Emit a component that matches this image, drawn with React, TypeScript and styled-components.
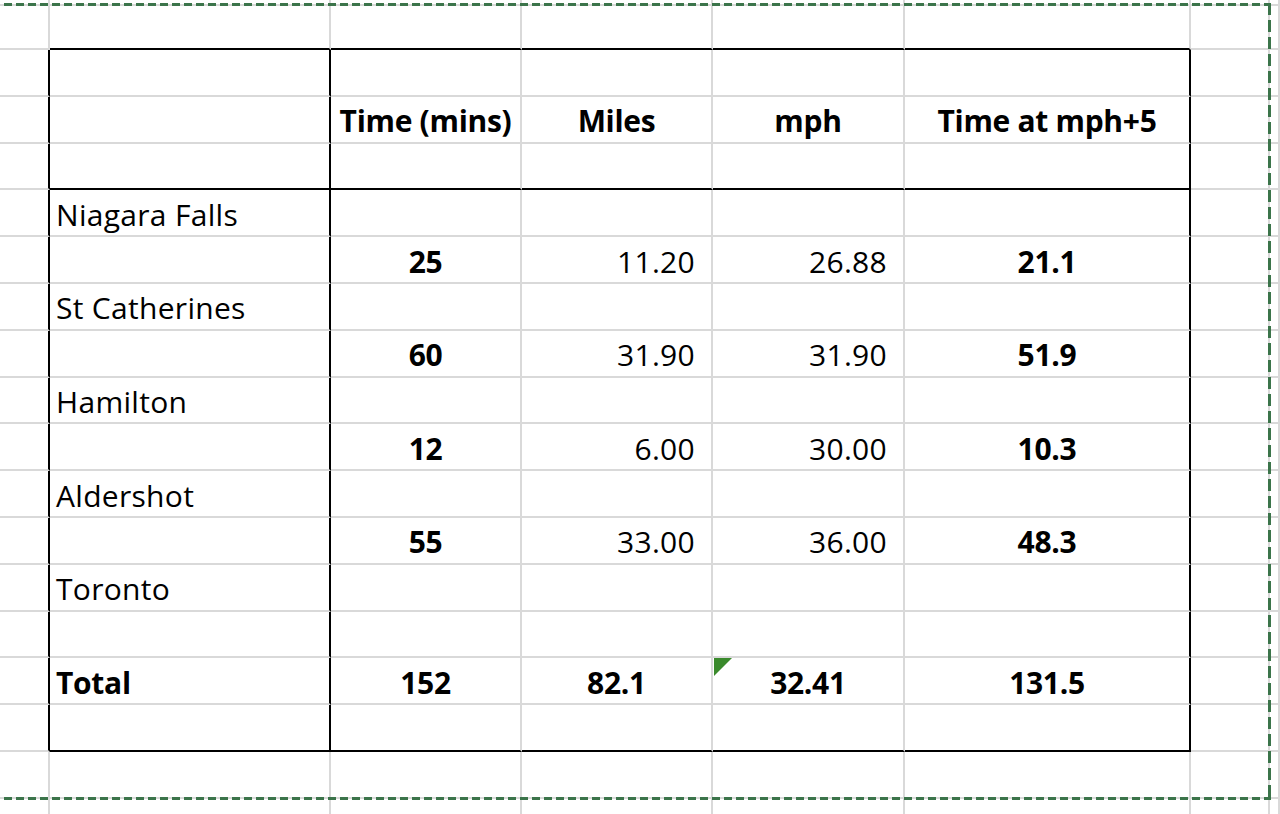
import React from 'react'
import styled, { createGlobalStyle } from 'styled-components'

const GlobalStyle = createGlobalStyle`
  html, body { margin: 0; padding: 0; background: #fff; overflow: hidden; }
  body { font-family: "Open Sans", "Noto Sans", "Liberation Sans", sans-serif; color: #000; }
`

const GRID = '#d9d9d9'
const INK = '#000'
const ANTS = '#3b744a'

type Align = 'left' | 'center' | 'right'
interface CellSpec { text?: string; align?: Align; bold?: boolean; flag?: boolean }

const Sheet = styled.div`
  display: grid;
  width: 1280px;
  height: 814px;
  overflow: hidden;
  grid-template-columns: 50px 281px 191px 191px 192px 286px 79px 1fr;
  grid-template-rows: 3.2px repeat(18, 46.8px);
`

const Cell = styled.div<{ $row: number; $col: number; $align: Align; $bold: boolean; $inkRight: boolean; $inkBottom: boolean; $flag: boolean }>`
  grid-row: ${p => p.$row + 1};
  grid-column: ${p => p.$col + 1};
  position: relative;
  box-sizing: border-box;
  display: flex;
  align-items: center;
  justify-content: ${p => p.$align === 'left' ? 'flex-start' : p.$align === 'right' ? 'flex-end' : 'center'};
  padding: 4px ${p => p.$align === 'right' ? '16px' : '0'} 0 ${p => p.$align === 'left' ? '6px' : '0'};
  border-right: 2px solid ${p => p.$inkRight ? INK : GRID};
  border-bottom: 2px solid ${p => p.$inkBottom ? INK : GRID};
  font-size: 30px;
  line-height: 36px;
  font-weight: ${p => p.$bold ? 700 : 400};
  letter-spacing: ${p => p.$bold ? '-0.3px' : '0.3px'};
  white-space: nowrap;
  &::before {
    content: '';
    display: ${p => p.$flag ? 'block' : 'none'};
    position: absolute;
    top: 0;
    left: 1px;
    width: 0;
    height: 0;
    border-top: 18px solid #3a8a2c;
    border-right: 18px solid transparent;
  }
`

// copy-range "marching ants" lying over the grid
const Selection = styled.div`
  grid-column: 1 / 8;
  grid-row: 2 / 19;
  margin: -0.2px -1px -1.2px -20px;
  pointer-events: none;
  z-index: 1;
  background:
    repeating-linear-gradient(90deg, ${ANTS} 0 8px, transparent 8px 12px) top left / 100% 3px no-repeat,
    repeating-linear-gradient(90deg, ${ANTS} 0 8px, transparent 8px 12px) bottom left / 100% 3px no-repeat,
    repeating-linear-gradient(180deg, ${ANTS} 0 12px, transparent 12px 17px) top right / 3px 100% no-repeat;
`

const head = (text: string): CellSpec => ({ text, align: 'center', bold: true })
const bold = (text: string): CellSpec => ({ text, align: 'center', bold: true })
const num = (text: string): CellSpec => ({ text, align: 'right' })
const label = (text: string): CellSpec => ({ text, align: 'left' })

// table body, columns B..F, sheet rows 2..16
const table: CellSpec[][] = [
  [],
  [{}, head('Time (mins)'), head('Miles'), head('mph'), head('Time at mph+5')],
  [],
  [label('Niagara Falls')],
  [{}, bold('25'), num('11.20'), num('26.88'), bold('21.1')],
  [label('St Catherines')],
  [{}, bold('60'), num('31.90'), num('31.90'), bold('51.9')],
  [label('Hamilton')],
  [{}, bold('12'), num('6.00'), num('30.00'), bold('10.3')],
  [label('Aldershot')],
  [{}, bold('55'), num('33.00'), num('36.00'), bold('48.3')],
  [label('Toronto')],
  [],
  [{ text: 'Total', align: 'left', bold: true }, bold('152'), bold('82.1'), { ...bold('32.41'), flag: true }, bold('131.5')],
  [],
]

const ROWS = 19
const COLS = 8
const TOP = 2
const BOTTOM = 16

const App: React.FC = () => {
  const cells = []
  for (let r = 0; r < ROWS; r++) {
    for (let c = 0; c < COLS; c++) {
      const inTable = r >= TOP && r <= BOTTOM
      const spec: CellSpec = (inTable && c >= 1 && c <= 5 && table[r - TOP][c - 1]) || {}
      const inkRight = inTable && (c === 0 || c === 1 || c === 5)
      const inkBottom = c >= 1 && c <= 5 && (r === 1 || r === 4 || r === BOTTOM)
      cells.push(
        <Cell
          key={`${r}-${c}`}
          $row={r}
          $col={c}
          $align={spec.align || 'left'}
          $bold={!!spec.bold}
          $inkRight={inkRight}
          $inkBottom={inkBottom}
          $flag={!!spec.flag}
        >
          {spec.text}
        </Cell>
      )
    }
  }
  return (
    <>
      <GlobalStyle />
      <Sheet>
        {cells}
        <Selection />
      </Sheet>
    </>
  )
}

export default App
